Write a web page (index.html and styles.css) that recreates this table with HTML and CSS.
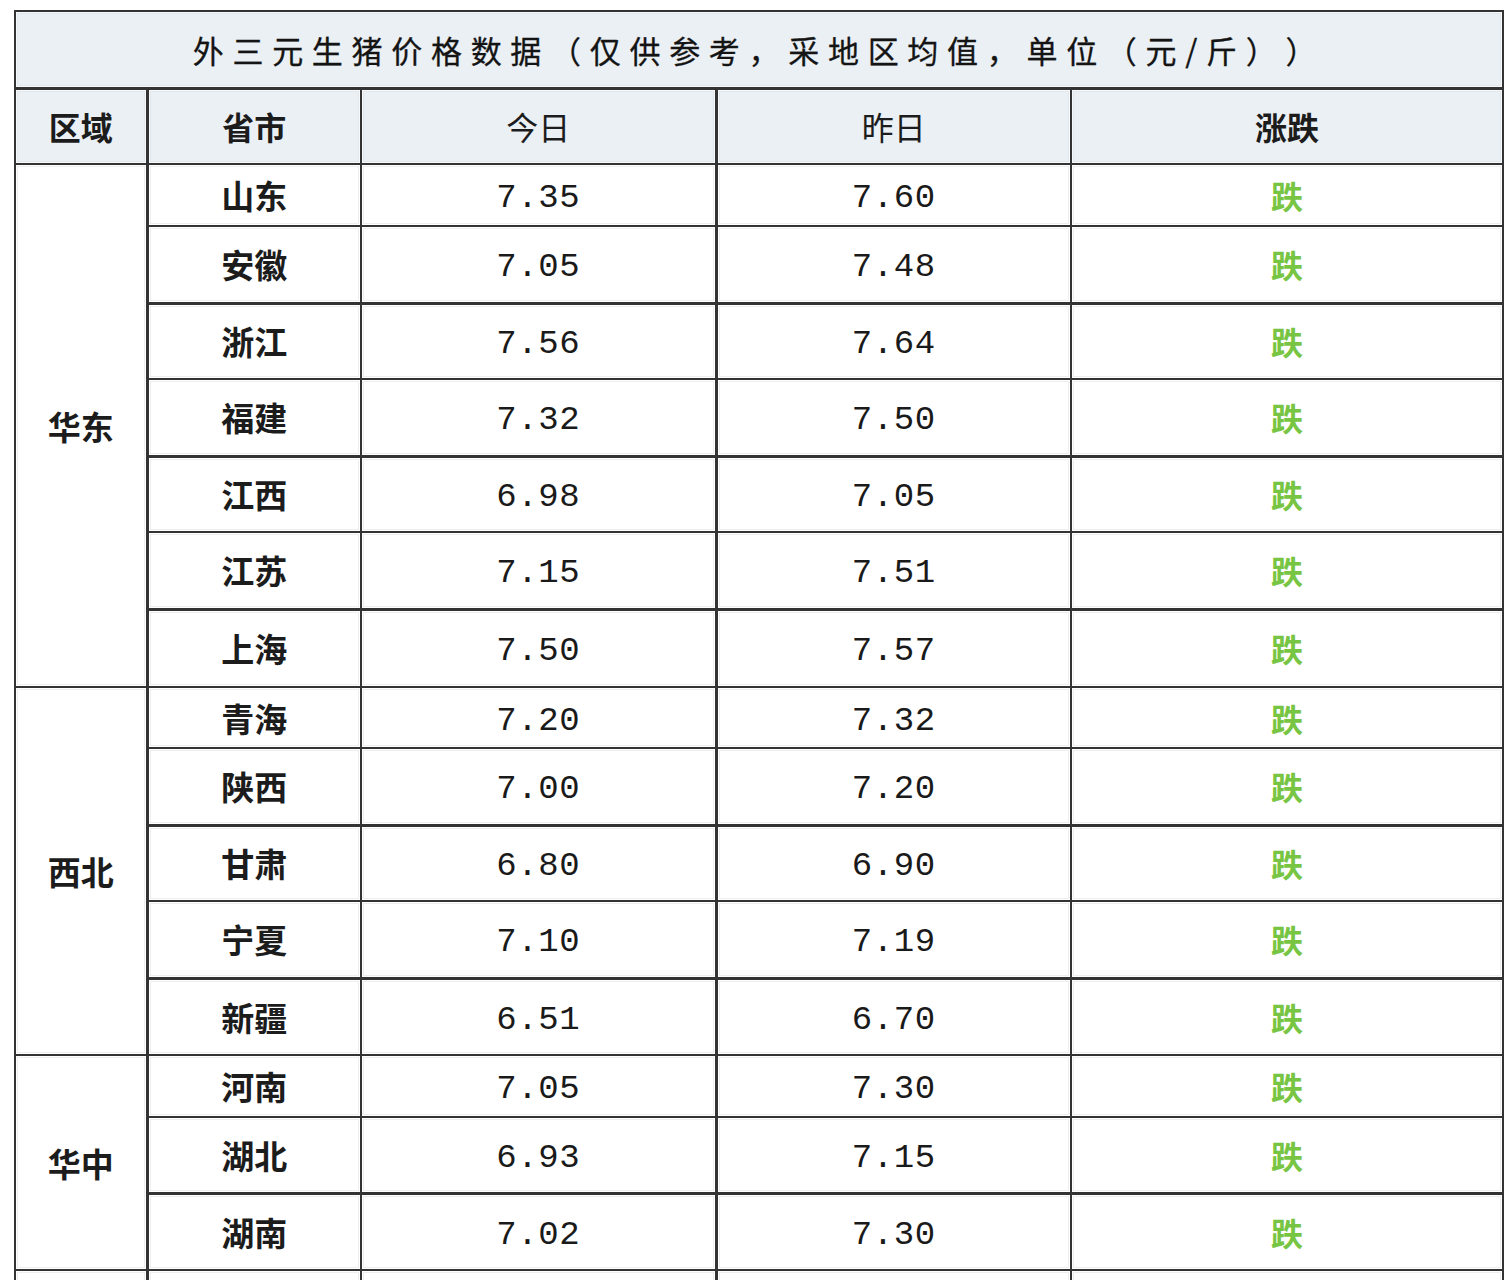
FILE: index.html
```html
<!DOCTYPE html>
<html lang="zh-CN">
<head>
<meta charset="utf-8">
<title>外三元生猪价格数据</title>
<link rel="stylesheet" href="styles.css">
</head>
<body>
<div class="page">
<table class="price">
  <colgroup>
    <col class="c-region">
    <col class="c-prov">
    <col class="c-num">
    <col class="c-num">
    <col class="c-trend">
  </colgroup>
  <thead>
    <tr class="title-row">
      <th colspan="5" class="title">外三元生猪价格数据（仅供参考，采地区均值，单位（元/斤））</th>
    </tr>
    <tr class="head-row">
      <th class="h-bold">区域</th>
      <th class="h-bold prov">省市</th>
      <th class="h-thin">今日</th>
      <th class="h-thin yest">昨日</th>
      <th class="h-bold">涨跌</th>
    </tr>
  </thead>
  <tbody>
    <tr class="r62">
      <td class="region" rowspan="7">华东</td>
      <td class="prov">山东</td><td class="num">7.35</td><td class="num yest">7.60</td><td class="down">跌</td>
    </tr>
    <tr class="r77">
      <td class="prov">安徽</td><td class="num">7.05</td><td class="num yest">7.48</td><td class="down">跌</td>
    </tr>
    <tr class="r76 thick">
      <td class="prov">浙江</td><td class="num">7.56</td><td class="num yest">7.64</td><td class="down">跌</td>
    </tr>
    <tr class="r77">
      <td class="prov">福建</td><td class="num">7.32</td><td class="num yest">7.50</td><td class="down">跌</td>
    </tr>
    <tr class="r76 thick">
      <td class="prov">江西</td><td class="num">6.98</td><td class="num yest">7.05</td><td class="down">跌</td>
    </tr>
    <tr class="r77">
      <td class="prov">江苏</td><td class="num">7.15</td><td class="num yest">7.51</td><td class="down">跌</td>
    </tr>
    <tr class="r78 thick">
      <td class="prov">上海</td><td class="num">7.50</td><td class="num yest">7.57</td><td class="down">跌</td>
    </tr>
    <tr class="r61">
      <td class="region" rowspan="5">西北</td>
      <td class="prov">青海</td><td class="num">7.20</td><td class="num yest">7.32</td><td class="down">跌</td>
    </tr>
    <tr class="r77">
      <td class="prov">陕西</td><td class="num">7.00</td><td class="num yest">7.20</td><td class="down">跌</td>
    </tr>
    <tr class="r76 thick">
      <td class="prov">甘肃</td><td class="num">6.80</td><td class="num yest">6.90</td><td class="down">跌</td>
    </tr>
    <tr class="r77">
      <td class="prov">宁夏</td><td class="num">7.10</td><td class="num yest">7.19</td><td class="down">跌</td>
    </tr>
    <tr class="r77 thick">
      <td class="prov">新疆</td><td class="num">6.51</td><td class="num yest">6.70</td><td class="down">跌</td>
    </tr>
    <tr class="r62">
      <td class="region" rowspan="3">华中</td>
      <td class="prov">河南</td><td class="num">7.05</td><td class="num yest">7.30</td><td class="down">跌</td>
    </tr>
    <tr class="r76">
      <td class="prov">湖北</td><td class="num">6.93</td><td class="num yest">7.15</td><td class="down">跌</td>
    </tr>
    <tr class="r77 thick">
      <td class="prov">湖南</td><td class="num">7.02</td><td class="num yest">7.30</td><td class="down">跌</td>
    </tr>
    <tr class="r62">
      <td class="region"></td>
      <td class="prov"></td><td class="num"></td><td class="num yest"></td><td class="down"></td>
    </tr>
  </tbody>
</table>
</div>
</body>
</html>
```

FILE: styles.css
```css
html, body {
  margin: 0;
  padding: 0;
  background: #ffffff;
}

.page {
  padding: 10px 0 0 14px;
}

.price {
  border-collapse: collapse;
  table-layout: fixed;
  width: 1488px;
  border: 2px solid #333333;
  font-family: "Noto Sans CJK SC", "Noto Sans", sans-serif;
  color: #1c1c1c;
  text-spacing-trim: space-all;
}

.c-region { width: 132px; }
.c-prov { width: 214px; }
.c-num { width: 355px; }
.c-trend { width: 432px; }

.price th,
.price td {
  border: 2px solid #333333;
  padding: 0;
  text-align: center;
  vertical-align: middle;
  box-shadow: inset 0 0 0 1px #ffffff, inset 0 0 0 2px #eeeeee;
}

.price thead th {
  background: #ebf0f5;
  box-shadow: inset 0 0 0 1px #f7f9fb, inset 0 0 0 2px #e2e7ec;
}

.title-row { height: 77px; }
.head-row { height: 76px; }
.head-row th { border-top-width: 3px; }

.title {
  font-size: 31px;
  font-weight: 400;
  letter-spacing: 8.7px;
  padding-left: 8px;
  color: #141414;
  text-spacing-trim: space-all;
  -webkit-text-stroke: 0.3px #141414;
}

.h-bold {
  font-size: 32px;
  font-weight: 700;
}

.h-thin {
  font-size: 32px;
  font-weight: 400;
}

.prov,
.yest {
  border-left-width: 3px !important;
}

.region,
td.prov {
  font-size: 33px;
  font-weight: 700;
}

.price td.num {
  font-family: "Liberation Mono", "DejaVu Sans Mono", monospace;
  font-size: 34px;
  letter-spacing: 0.6px;
  color: #1a1a1a;
  padding-top: 6px;
  line-height: 40px;
}

.down {
  font-size: 32px;
  font-weight: 700;
  color: #78c544;
}

.thick td { border-top-width: 3px; }

.r61 { height: 61px; }
.r62 { height: 62px; }
.r76 { height: 76px; }
.r77 { height: 77px; }
.r78 { height: 78px; }
```
